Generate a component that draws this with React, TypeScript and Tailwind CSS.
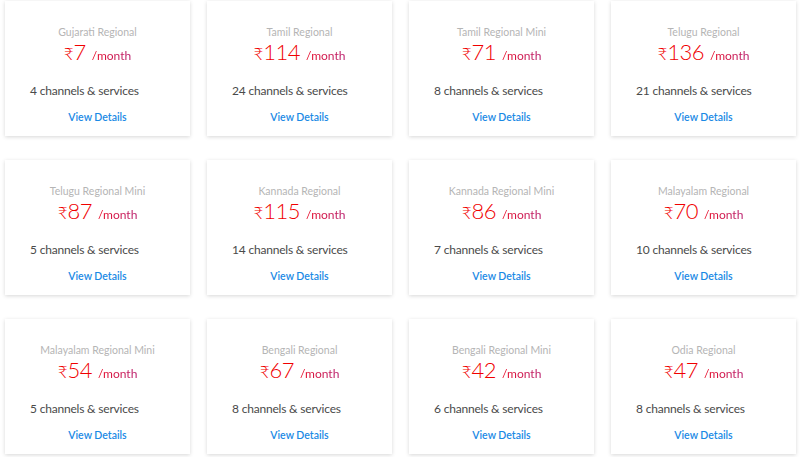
import React from "react";

const plans = [
  { name: "Gujarati Regional", price: 7, channels: 4 },
  { name: "Tamil Regional", price: 114, channels: 24 },
  { name: "Tamil Regional Mini", price: 71, channels: 8 },
  { name: "Telugu Regional", price: 136, channels: 21 },
  { name: "Telugu Regional Mini", price: 87, channels: 5 },
  { name: "Kannada Regional", price: 115, channels: 14 },
  { name: "Kannada Regional Mini", price: 86, channels: 7 },
  { name: "Malayalam Regional", price: 70, channels: 10 },
  { name: "Malayalam Regional Mini", price: 54, channels: 5 },
  { name: "Bengali Regional", price: 67, channels: 8 },
  { name: "Bengali Regional Mini", price: 42, channels: 6 },
  { name: "Odia Regional", price: 47, channels: 8 },
];

function Card({ name, price, channels }: { name: string; price: number; channels: number }) {
  return (
    <div className="h-[135px] bg-white shadow-[0_1px_4px_rgba(0,0,0,0.16)] flex flex-col pt-[23px]">
      <div className="text-center text-[10.5px] leading-[16px] text-[#b5b5b5]">{name}</div>
      <div className="flex justify-center items-baseline h-[24px] leading-[24px]">
        <span className="text-[17px] font-light text-[#f00000]">₹</span>
        <span className="text-[22px] font-light tracking-[-0.5px] text-[#f00000]">{price}</span>
        <span className="ml-[6px] text-[12px] bg-gradient-to-r from-[#e8001a] to-[#b8196a] bg-clip-text text-transparent">
          /month
        </span>
      </div>
      <div className="mt-[18px] pl-[25px] text-[12px] tracking-[-0.2px] leading-[18px] text-[#4a4a4a]">
        {channels} channels &amp; services
      </div>
      <div className="mt-[9px] text-center text-[10.5px] leading-[16px] font-semibold text-[#1a8ae5]">
        View Details
      </div>
    </div>
  );
}

export default function App() {
  return (
    <div
      className="w-[800px] h-[457px] bg-white overflow-hidden pt-[1px] pl-[5px]"
      style={{ fontFamily: 'Lato, "Noto Sans", sans-serif' }}
    >
      <div className="grid grid-cols-4 w-[791px] gap-x-[17px] gap-y-[24px]">
        {plans.map((p) => (
          <Card key={p.name} {...p} />
        ))}
      </div>
    </div>
  );
}
